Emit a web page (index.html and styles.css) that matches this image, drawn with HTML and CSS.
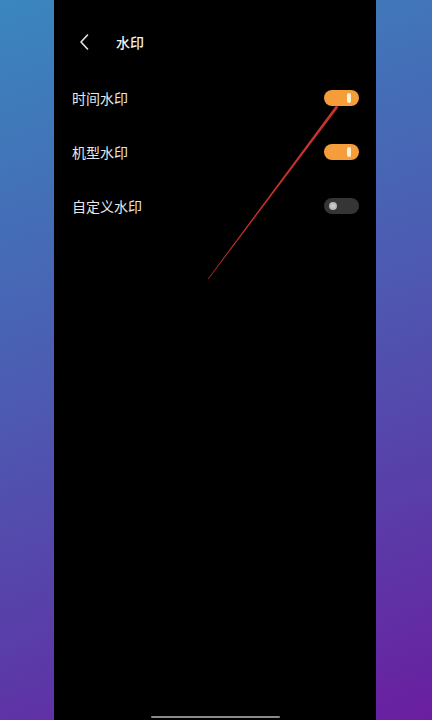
FILE: index.html
```html
<!DOCTYPE html>
<html lang="zh-CN">
<head>
<meta charset="utf-8">
<title>水印</title>
<link rel="stylesheet" href="styles.css">
</head>
<body>
<div class="screen">
  <header class="header">
    <svg class="back" width="10" height="16" viewBox="0 0 10 16"><path d="M8.5 1 L2 8 L8.5 15" fill="none" stroke="#e6e6e6" stroke-width="1.6" stroke-linecap="round" stroke-linejoin="round"/></svg>
    <h1 class="title">水印</h1>
  </header>
  <ul class="list">
    <li class="row"><span class="label">时间水印</span><span class="toggle on"><span class="knob"></span></span></li>
    <li class="row"><span class="label">机型水印</span><span class="toggle on"><span class="knob"></span></span></li>
    <li class="row"><span class="label">自定义水印</span><span class="toggle off"><span class="knob"></span></span></li>
  </ul>
  <div class="spacer"></div>
  <div class="home-bar"></div>
  <svg class="annotation" width="322" height="720" viewBox="0 0 322 720"><polygon points="282,105.5 284.5,107 154.4,279.2 153.8,279" fill="#c8322c"/></svg>
</div>
</body>
</html>
```

FILE: styles.css
```css
html, body {
  margin: 0;
  padding: 0;
}
body {
  width: 432px;
  height: 720px;
  overflow: hidden;
  background: linear-gradient(160deg, #3a86be 0%, #4c5cb2 45%, #5a3ca8 75%, #6a1ea0 100%);
  font-family: "Noto Sans CJK SC", "Noto Sans", sans-serif;
}
.screen {
  position: relative;
  width: 322px;
  height: 720px;
  margin-left: 54px;
  background: #000;
  display: flex;
  flex-direction: column;
}
.header {
  height: 30px;
  margin-top: 27px;
  display: flex;
  align-items: center;
  padding-left: 25px;
}
.back {
  display: block;
}
.title {
  margin: 0 0 0 27px;
  font-size: 14px;
  font-weight: 500;
  color: #f2f2f2;
  line-height: 30px;
}
.list {
  list-style: none;
  margin: 14px 0 0 0;
  padding: 0;
}
.row {
  height: 54px;
  display: flex;
  align-items: center;
  justify-content: space-between;
  padding: 0 17px 0 18px;
}
.label {
  font-size: 14px;
  color: #e8e8e8;
  line-height: 20px;
}
.toggle {
  position: relative;
  width: 35px;
  height: 16px;
  border-radius: 8px;
  display: flex;
  align-items: center;
}
.toggle.on {
  background: #f49d3a;
  justify-content: flex-end;
  padding-right: 8px;
  box-sizing: border-box;
}
.toggle.on .knob {
  width: 4px;
  height: 10px;
  border-radius: 2px;
  background: #fff1d6;
}
.toggle.off {
  background: #353535;
  padding-left: 5px;
  box-sizing: border-box;
}
.toggle.off .knob {
  width: 8px;
  height: 8px;
  border-radius: 50%;
  background: radial-gradient(circle, #d2d2d2 0%, #a2a2a2 100%);
}
.spacer {
  flex: 1;
}
.home-bar {
  align-self: center;
  width: 129px;
  height: 2px;
  border-radius: 1px;
  background: #8a8a8a;
  margin-bottom: 2px;
}
.annotation {
  position: absolute;
  left: 0;
  top: 0;
  pointer-events: none;
}
```
